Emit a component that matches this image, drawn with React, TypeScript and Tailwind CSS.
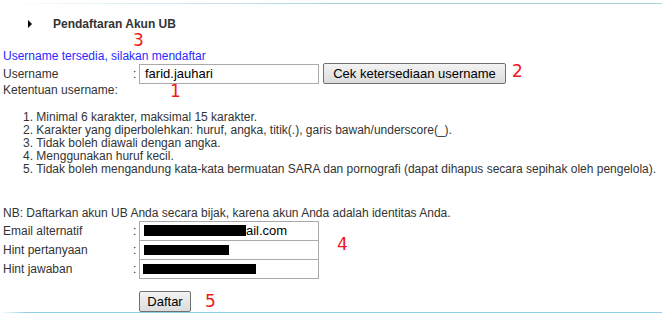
import { FC } from "react";

const rules = [
    "Minimal 6 karakter, maksimal 15 karakter.",
    "Karakter yang diperbolehkan: huruf, angka, titik(.), garis bawah/underscore(_).",
    "Tidak boleh diawali dengan angka.",
    "Menggunakan huruf kecil.",
    "Tidak boleh mengandung kata-kata bermuatan SARA dan pornografi (dapat dihapus secara sepihak oleh pengelola).",
];

const Mark: FC<{ n: string; className?: string }> = ({ n, className }) => (
    <span
        className={`text-[17px] leading-none text-[#f01818] ${className ?? ""}`}
        style={{ fontFamily: '"DejaVu Sans", sans-serif' }}
    >
        {n}
    </span>
);

const Row: FC<{ label: string; children: React.ReactNode }> = ({ label, children }) => (
    <div className="flex items-center h-[19px]">
        <span className="w-[133px] pl-[3px]">{label}</span>
        <span className="w-[6px]">:</span>
        {children}
    </div>
);

export default function App() {
    return (
        <div
            className="w-[662px] h-[332px] bg-white text-[#333] text-[12px] overflow-hidden"
            style={{ fontFamily: '"Liberation Sans", Arial, sans-serif' }}
        >
            <div className="h-[3px]" />
            <div className="h-[1px] bg-gradient-to-r from-white via-[#a9d4e2] to-[#a9d4e2]" />

            <div className="flex items-center h-[26px] pl-[28px] pt-[14px] leading-[12px]">
                <span className="w-0 h-0 border-y-[4px] border-y-transparent border-l-[4px] border-l-black" />
                <span className="ml-[21px] font-bold text-[12px] text-[#333]">Pendaftaran Akun UB</span>
            </div>

            <div className="pl-[133px] h-[19px] pt-[2px] flex items-start">
                <Mark n="3" />
            </div>

            <div className="pl-[3px] text-[#2a2aff] leading-[15px]">
                Username tersedia, silakan mendaftar
            </div>

            <div className="flex items-center h-[21px] -mt-[1px]">
                <span className="w-[133px] pl-[3px]">Username</span>
                <span className="w-[6px]">:</span>
                <div className="w-[180px] h-[20px] border border-[#a9a9a9] flex items-center pl-[5px] text-[13px] text-black">
                    farid.jauhari
                </div>
                <button className="ml-[4px] w-[183px] h-[21px] border border-[#707070] rounded-[2px] bg-gradient-to-b from-[#f3f3f3] to-[#dcdcdc] text-[13px] text-black leading-none">
                    Cek ketersediaan username
                </button>
                <Mark n="2" className="ml-[6px] -mt-[5px]" />
            </div>

            <div className="flex items-end h-[15px]">
                <span className="pl-[3px] w-[170px]">Ketentuan username:</span>
                <Mark n="1" className="-mb-[1px]" />
            </div>

            <ol className="mt-[12px] pl-[23px] leading-[13px] text-[12px] text-[#333]">
                {rules.map((r, i) => (
                    <li key={i}>
                        {i + 1}. {r}
                    </li>
                ))}
            </ol>

            <div className="mt-[30px] pl-[3px] leading-[15px]">
                NB: Daftarkan akun UB Anda secara bijak, karena akun Anda adalah identitas Anda.
            </div>

            <div className="flex">
                <div className="flex flex-col">
                    <Row label="Email alternatif">
                        <div className="w-[180px] h-[20px] border border-[#a9a9a9] flex items-center pl-[4px] text-[13px] text-black">
                            <span className="w-[102px] h-[11px] bg-black" />
                            <span>ail.com</span>
                        </div>
                    </Row>
                    <Row label="Hint pertanyaan">
                        <div className="w-[180px] h-[20px] border border-[#a9a9a9] flex items-center pl-[4px]">
                            <span className="w-[85px] h-[10px] bg-black" />
                        </div>
                    </Row>
                    <Row label="Hint jawaban">
                        <div className="w-[180px] h-[20px] border border-[#a9a9a9] flex items-center pl-[3px]">
                            <span className="w-[113px] h-[10px] bg-black" />
                        </div>
                    </Row>
                </div>
                <Mark n="4" className="ml-[18px] mt-[15px]" />
            </div>

            <div className="flex items-center pl-[139px] mt-[13px] h-[21px]">
                <button className="w-[52px] h-[21px] border border-[#707070] rounded-[2px] bg-gradient-to-b from-[#f3f3f3] to-[#dcdcdc] text-[13px] text-black leading-none">
                    Daftar
                </button>
                <Mark n="5" className="ml-[14px]" />
            </div>

            <div className="h-[1px] bg-gradient-to-r from-white to-[#8fcde0] to-[4%]" />
        </div>
    );
}
